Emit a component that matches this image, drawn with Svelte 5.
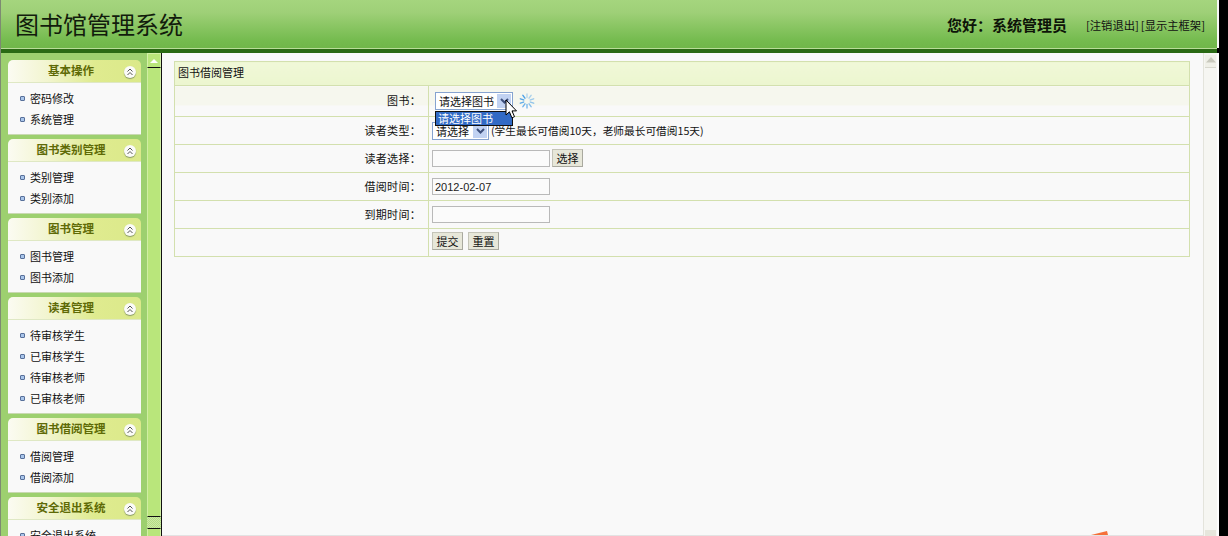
<script>
  const panels = [
    { title: '基本操作', items: ['密码修改', '系统管理'] },
    { title: '图书类别管理', items: ['类别管理', '类别添加'] },
    { title: '图书管理', items: ['图书管理', '图书添加'] },
    { title: '读者管理', items: ['待审核学生', '已审核学生', '待审核老师', '已审核老师'] },
    { title: '图书借阅管理', items: ['借阅管理', '借阅添加'] },
    { title: '安全退出系统', items: ['安全退出系统'] }
  ];
  const rays = Array.from({ length: 10 }, (_, i) => i * 36);
</script>

<div class="app">
  <div class="frame">
    <header class="top">
      <h1>图书馆管理系统</h1>
      <div class="user">
        <strong>您好：系统管理员</strong>
        <span class="links"><a href="#out">[注销退出]</a><a href="#frame">[显示主框架]</a></span>
      </div>
    </header>
    <div class="rule"></div>
    <div class="main">
      <nav class="side">
        {#each panels as p}
          <section class="panel">
            <div class="ph">
              <span class="pt">{p.title}</span>
              <span class="fold">
                <svg width="8" height="8" viewBox="0 0 8 8" fill="none" stroke="#555" stroke-width="1">
                  <path d="M1.5 3.5 4 1l2.5 2.5M1.5 7 4 4.5 6.5 7" />
                </svg>
              </span>
            </div>
            <ul>
              {#each p.items as it}
                <li><i></i>{it}</li>
              {/each}
            </ul>
          </section>
        {/each}
      </nav>

      <div class="split">
        <div class="sbtn"><b></b></div>
        <div class="strack"></div>
        <div class="shatch"></div>
        <div class="sbtn low"><b></b></div>
      </div>

      <div class="content">
        <table>
          <colgroup><col class="c1" /><col /></colgroup>
          <tbody>
            <tr class="head"><th colspan="2">图书借阅管理</th></tr>
            <tr class="r1">
              <td class="l">图书：</td>
              <td class="v">
                <div class="pick">
                  <div class="combo wide">
                    <span>请选择图书</span><em><svg width="9" height="6" viewBox="0 0 9 6" fill="none" stroke="#3d4f7c" stroke-width="2"><path d="M1 1l3.5 3.5L8 1" /></svg></em>
                    <div class="drop">请选择图书</div>
                    <svg class="cursor" width="14" height="20" viewBox="0 0 14 20">
                      <path d="M1 1v15l3.4-3.2 2.5 6 2.6-1.1-2.5-5.8H11.5z" fill="#fff" stroke="#000" stroke-width="1" />
                    </svg>
                  </div>
                  <svg class="spin" width="16" height="16" viewBox="0 0 16 16" stroke="#3f9be8" stroke-width="1.4" stroke-linecap="round">
                    {#each rays as a, i}
                      <line x1="8" y1="1" x2="8" y2="4.5" transform="rotate({a} 8 8)" opacity={0.35 + i * 0.065} />
                    {/each}
                  </svg>
                </div>
              </td>
            </tr>
            <tr class="r">
              <td class="l">读者类型：</td>
              <td class="v">
                <div class="line">
                  <div class="combo small">
                    <span>请选择</span><em><svg width="9" height="6" viewBox="0 0 9 6" fill="none" stroke="#3d4f7c" stroke-width="2"><path d="M1 1l3.5 3.5L8 1" /></svg></em>
                  </div>
                  <span class="note">(学生最长可借阅10天，老师最长可借阅15天)</span>
                </div>
              </td>
            </tr>
            <tr class="r">
              <td class="l">读者选择：</td>
              <td class="v"><div class="line"><input type="text" /><button type="button" class="pickbtn">选择</button></div></td>
            </tr>
            <tr class="r">
              <td class="l">借阅时间：</td>
              <td class="v"><div class="line"><input type="text" value="2012-02-07" /></div></td>
            </tr>
            <tr class="r">
              <td class="l">到期时间：</td>
              <td class="v"><div class="line"><input type="text" /></div></td>
            </tr>
            <tr class="r">
              <td class="l"></td>
              <td class="v"><div class="line acts"><button type="button">提交</button><button type="button">重置</button></div></td>
            </tr>
          </tbody>
        </table>
        <svg class="mark" width="18" height="4" viewBox="0 0 18 4"><path d="M0 4 14 0.5 16 0 17 4z" fill="#f5703a" /></svg>
      </div>

      <div class="vscroll">
        <div class="vbtn"><svg width="10" height="6" viewBox="0 0 10 6"><path d="M5 0 10 5.5H0z" fill="#c9c9bd" /></svg></div>
        <div class="vbtn lowv"></div>
      </div>
      <div class="edge"></div>
    </div>
  </div>
</div>

<style>
  :global(body) {
    margin: 0;
    background: #000;
  }
  .app {
    width: 1228px;
    height: 536px;
    overflow: hidden;
    background: #000;
    font-family: "Noto Sans CJK SC", "Liberation Sans", sans-serif;
    font-size: 11px;
    line-height: 14px;
    color: #111;
  }
  .frame {
    width: 1219px;
    height: 536px;
    box-sizing: border-box;
    border-left: 1px solid #7d8a72;
    display: flex;
    flex-direction: column;
    overflow: hidden;
  }
  .top {
    height: 48px;
    flex: none;
    box-sizing: border-box;
    display: flex;
    justify-content: space-between;
    align-items: center;
    padding: 0 12px 0 14px;
    background: linear-gradient(#a5d57e, #9fd078 25%, #74bb4e 85%, #70b74a);
    border-right: 2px solid #f6f6f6;
  }
  h1 {
    margin: 0;
    font-size: 24px;
    font-weight: 400;
    line-height: 48px;
    color: #121c0c;
  }
  .user {
    display: flex;
    align-items: center;
    position: relative;
    top: 1px;
  }
  .user strong {
    font-size: 15px;
    line-height: 20px;
    font-weight: 700;
    color: #0d1408;
    margin-right: 19px;
  }
  .links {
    display: flex;
    gap: 2px;
    width: 119px;
  }
  .links a {
    color: #111;
    text-decoration: none;
    font-size: 11.3px;
    white-space: nowrap;
  }
  .rule {
    height: 5px;
    flex: none;
    box-sizing: border-box;
    border-top: 1px solid #b8dd98;
    background: #2a6a14;
    margin-right: 2px;
  }
  .main {
    flex: 1;
    min-height: 0;
    display: flex;
    overflow: hidden;
  }
  .side {
    width: 146px;
    flex: none;
    box-sizing: border-box;
    padding: 7px 6px 0 7px;
    background: #9dd06f;
    overflow: hidden;
  }
  .panel {
    margin-bottom: 4px;
  }
  .ph {
    height: 23px;
    box-sizing: border-box;
    position: relative;
    display: flex;
    align-items: center;
    justify-content: center;
    padding-right: 7px;
    border-radius: 5px 5px 0 0;
    border-bottom: 1px solid #dfe8c4;
    background: linear-gradient(90deg, #fbfbf2, #f2f5cf 30%, #dfeb8f 65%, #dbe98a);
  }
  .pt {
    font-size: 11.5px;
    font-weight: 700;
    color: #5e6a06;
    position: relative;
    top: -1px;
  }
  .fold {
    position: absolute;
    right: 5px;
    top: 6px;
    width: 12px;
    height: 12px;
    border-radius: 50%;
    background: #fbfbf8;
    box-shadow: 0 1px 1px #8a9a68;
    display: flex;
    align-items: center;
    justify-content: center;
  }
  ul {
    list-style: none;
    margin: 0;
    padding: 5px 0 4px;
    background: #f9f9f9;
    border-bottom: 1px solid #c9d9b2;
  }
  li {
    height: 21px;
    line-height: 21px;
    display: flex;
    align-items: center;
    padding-left: 12px;
    color: #111;
    white-space: nowrap;
  }
  li i {
    width: 3px;
    height: 3px;
    margin-right: 5px;
    border: 1px solid #58709a;
    background: #a9c5ea;
    border-radius: 1px;
  }
  .split {
    width: 15px;
    flex: none;
    box-sizing: border-box;
    display: flex;
    flex-direction: column;
    border-right: 1px solid #111;
    background: #b9e67b;
    overflow: hidden;
  }
  .sbtn {
    height: 14px;
    flex: none;
    background: #b9e67b;
    border: 1px solid #d4f0a8;
    border-bottom: 0;
    box-sizing: border-box;
    display: flex;
    align-items: center;
    justify-content: center;
  }
  .sbtn b {
    width: 0;
    height: 0;
    border: 4px solid transparent;
    border-top: 0;
    border-bottom: 4px solid #fff;
  }
  .sbtn.low {
    border-top: 1px solid #111;
    padding-top: 2px;
    height: 20px;
  }
  .strack {
    height: 450px;
    flex: none;
    box-sizing: border-box;
    border: 1px solid #d0eea2;
    border-top: 1px solid #111;
    border-bottom: 1px solid #111;
    background: #b9e67b;
  }
  .shatch {
    height: 11px;
    flex: none;
    background: repeating-conic-gradient(#cdeaa6 0 25%, #b3dd84 0 50%) 0 0 / 2px 2px;
  }
  .content {
    flex: 1;
    min-width: 0;
    box-sizing: border-box;
    padding: 8px 0 0 12px;
    background: #f9f9f9;
    position: relative;
    border-bottom: 1px solid #e3e3e3;
  }
  table {
    width: 1016px;
    border-collapse: collapse;
    table-layout: fixed;
  }
  .c1 {
    width: 254px;
  }
  th,
  td {
    border: 1px solid #d3e0ae;
    padding: 0;
    font-weight: 400;
  }
  .head th {
    height: 20px;
    text-align: left;
    padding: 0 0 3px 3px;
    background: linear-gradient(#f0f8d8, #ecf6cf);
    color: #111;
  }
  .l {
    text-align: right;
    padding: 0 7px 2px 0;
    letter-spacing: 0.3px;
    color: #111;
  }
  .r1 td {
    height: 28px;
    background: linear-gradient(#f6f7ee 65%, #f9f9f9 65%);
  }
  .r td {
    height: 25px;
  }
  .v {
    padding-left: 3px;
    position: relative;
  }
  .pick {
    display: flex;
    align-items: center;
    gap: 6px;
    padding-left: 3px;
  }
  .line {
    display: flex;
    align-items: center;
    gap: 2px;
    height: 18px;
  }
  .combo {
    display: flex;
    align-items: center;
    justify-content: space-between;
    box-sizing: border-box;
    height: 18px;
    border: 1px solid #86a3d0;
    background: #fff;
    padding: 0 1px 0 3px;
    position: relative;
    white-space: nowrap;
  }
  .combo.wide {
    width: 78px;
  }
  .combo.small {
    width: 57px;
  }
  .combo em {
    width: 14px;
    height: 14px;
    display: flex;
    align-items: center;
    justify-content: center;
    background: #c1d2f2;
  }
  .drop {
    position: absolute;
    left: -1px;
    top: 18px;
    width: 78px;
    height: 15px;
    box-sizing: border-box;
    border: 1px solid #111;
    background: #316ac5;
    color: #fff;
    line-height: 12px;
    padding-left: 2px;
    z-index: 3;
  }
  .cursor {
    position: absolute;
    left: 69px;
    top: 6px;
    z-index: 4;
  }
  .note {
    white-space: nowrap;
    font-size: 10.7px;
  }
  input {
    width: 118px;
    height: 17px;
    box-sizing: border-box;
    border: 1px solid #b9b9b9;
    background: #fbfbfb;
    padding: 0 2px;
    font: 11px "Liberation Sans", sans-serif;
    color: #222;
    outline: 0;
  }
  button {
    height: 18px;
    width: 31px;
    box-sizing: border-box;
    border: 1px solid #c4c4b8;
    border-right-color: #a9a99f;
    border-bottom-color: #a9a99f;
    background: #e7e7d9;
    padding: 0 0 3px;
    font: 11px "Noto Sans CJK SC", sans-serif;
    color: #111;
  }
  .acts {
    gap: 5px;
    padding-bottom: 3px;
    box-sizing: content-box;
    height: 18px;
  }
  .pickbtn {
    position: relative;
    top: -1px;
  }
  .mark {
    position: absolute;
    left: 929px;
    bottom: 0;
  }
  .vscroll {
    width: 14px;
    flex: none;
    box-sizing: border-box;
    border-left: 1px solid #e4e4dc;
    background: #f6f6f2;
    display: flex;
    flex-direction: column;
    justify-content: space-between;
    align-items: center;
    padding: 2px 0 0;
  }
  .vbtn {
    width: 11px;
    height: 13px;
    display: flex;
    justify-content: center;
    padding-top: 2px;
    box-sizing: border-box;
    border-bottom: 1px solid #d8d8ce;
    background: #f0f0e8;
  }
  .vbtn.lowv {
    height: 6px;
    border-bottom: 0;
    background: #e6e6dc;
  }
  .edge {
    width: 2px;
    flex: none;
    background: #fdfdfd;
  }
</style>
